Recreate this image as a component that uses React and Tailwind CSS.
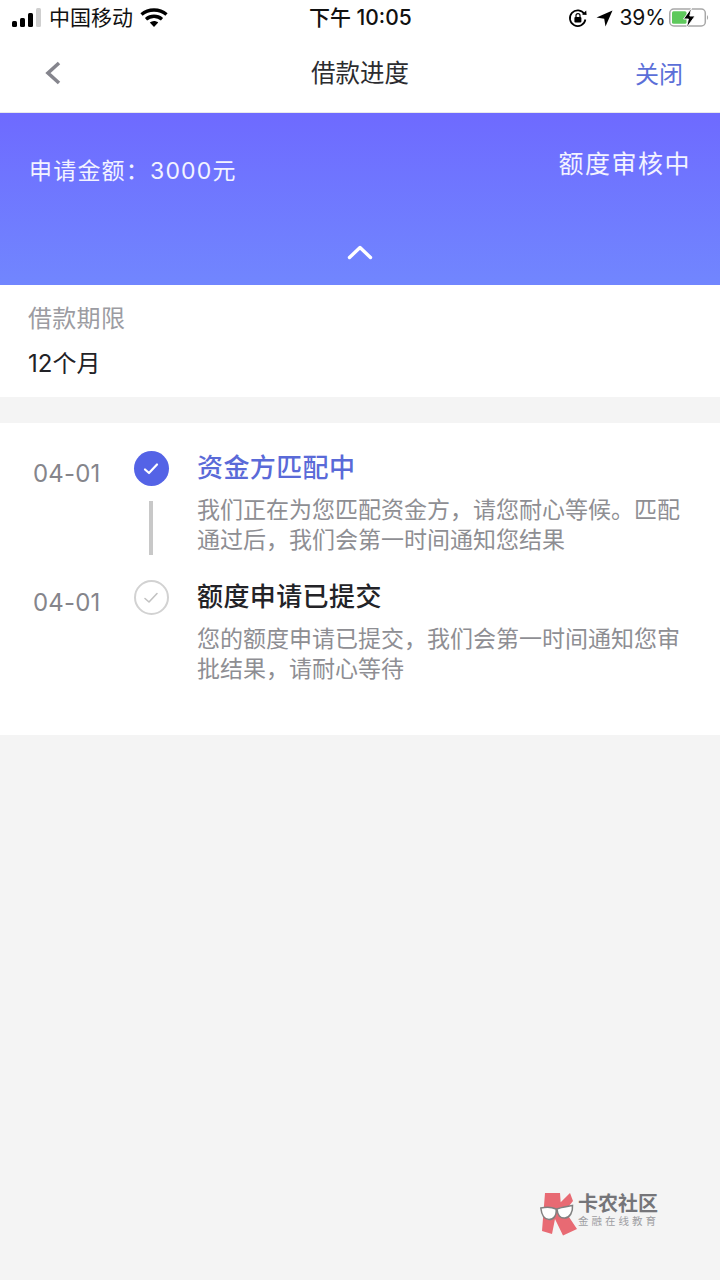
const font = { fontFamily: '"Inter","Noto Sans CJK SC",sans-serif' };

function Signal() {
  return (
    <svg width="30" height="20" viewBox="0 0 30 20" className="block">
      <rect x="0" y="13" width="5" height="6" rx="1.5" fill="#000" />
      <rect x="8" y="10" width="5" height="9" rx="1.5" fill="#000" />
      <rect x="16" y="5" width="5" height="14" rx="1.5" fill="#000" />
      <rect x="24" y="0" width="5" height="19" rx="1.5" fill="#cfcfcf" />
    </svg>
  );
}

function Wifi() {
  return (
    <svg width="28" height="20" viewBox="0 0 28 20" className="block">
      <path d="M1.5 6.5 C8.5 0.5 19.5 0.5 26.5 6.5" fill="none" stroke="#000" strokeWidth="3.4" />
      <path d="M6 11.2 C10.8 7.3 17.2 7.3 22 11.2" fill="none" stroke="#000" strokeWidth="3.4" />
      <path d="M9.8 14.4 C12.4 12.4 15.6 12.4 18.2 14.4 L14 19 Z" fill="#000" />
    </svg>
  );
}

function RotationLock() {
  return (
    <svg width="20" height="20" viewBox="0 0 20 20" className="block">
      <path d="M16.4 6.2 A7.8 7.8 0 1 0 17.4 11.5" fill="none" stroke="#000" strokeWidth="1.7" />
      <path d="M14 6.4 L18.6 7 L18.2 2.6 Z" fill="#000" />
      <rect x="6.4" y="9" width="7" height="5.4" rx="1" fill="#000" />
      <path d="M8 9 V7.6 A2 2 0 0 1 12 7.6 V9" fill="none" stroke="#000" strokeWidth="1.2" />
    </svg>
  );
}

function LocationArrow() {
  return (
    <svg width="17" height="17" viewBox="0 0 17 17" className="block">
      <path d="M16.5 0.5 L0.5 7.5 L8.2 8.8 L9.5 16.5 Z" fill="#000" />
    </svg>
  );
}

function Battery() {
  return (
    <svg width="42" height="22" viewBox="0 0 42 22" className="block">
      <rect x="0.8" y="2" width="35.5" height="17" rx="4" fill="none" stroke="#a8a8a8" strokeWidth="1.5" />
      <rect x="3" y="4.2" width="14.5" height="12.6" rx="1.5" fill="#5ec95c" />
      <path d="M38 8 Q40.3 10.5 38 13 Z" fill="#a8a8a8" />
      <path d="M22.5 1 L14.5 12 H19.4 L17.4 21 L26 9 H20.8 Z" fill="#000" stroke="#fff" strokeWidth="0.9" />
    </svg>
  );
}

function Check({ color, w = 2.2 }) {
  return (
    <svg width="16" height="14" viewBox="0 0 16 14" className="block">
      <path d="M2 7.5 L6 11 L14 2.5" fill="none" stroke={color} strokeWidth={w} strokeLinecap="round" strokeLinejoin="round" />
    </svg>
  );
}

function Logo() {
  return (
    <svg width="38" height="46" viewBox="0 0 38 46" className="block">
      <path d="M5 2 H20 L20.7 11.3 L30 2 L33 10 L25 20 L37 38 L23 44.5 L15 28 L12 43 L2 40 Z" fill="#e8636d" />
      <path d="M0.8 17 C5 16 12 16 16 18 C17 24 14 28.5 9 28.5 C4 28.5 1.5 23 0.8 17 Z" fill="#fff" stroke="#7a7a7a" strokeWidth="1.5" />
      <path d="M17 18 C21 16 27 15.5 32.5 14.5 C33 21 30 26.5 25 27 C20 27.5 17.5 24 17 18 Z" fill="#fff" stroke="#7a7a7a" strokeWidth="1.5" />
    </svg>
  );
}

function Step({ date, title, titleClass, desc, active, last }) {
  return (
    <div className="flex">
      <div className="w-[134px] shrink-0 pl-[33px] pt-[18px] text-[24px] leading-[32px] text-[#85858b] tracking-[0.2px]">{date}</div>
      <div className="w-[34px] shrink-0 flex flex-col items-center pt-[11px]">
        {active ? (
          <div className="w-[35px] h-[35px] rounded-full bg-[#5463e6] flex items-center justify-center">
            <Check color="#ffffff" />
          </div>
        ) : (
          <div className="w-[35px] h-[35px] rounded-full border-2 border-[#d2d2d2] flex items-center justify-center">
            <Check color="#c2c2c2" w={1.6} />
          </div>
        )}
        {!last && <div className="w-[4px] h-[54px] bg-[#c8c8c8] mt-[15px]" />}
      </div>
      <div className="flex-1 pl-[29px] pr-[36px]">
        <div className={`text-[26px] leading-[34px] pt-[11px] font-medium tracking-[0.4px] ${titleClass}`}>{title}</div>
        <div className="mt-[10px] text-[23px] leading-[30px] text-[#8e8e93]">{desc}</div>
      </div>
    </div>
  );
}

export default function App() {
  return (
    <div style={font} className="relative w-[720px] h-[1280px] bg-[#f4f4f4] overflow-hidden flex flex-col">
      <div className="h-[36px] bg-white flex items-center justify-between relative shrink-0">
        <div className="flex items-center pl-[12px]">
          <Signal />
          <span className="ml-[7px] text-[21px] leading-[36px] text-[#111]">中国移动</span>
          <span className="ml-[7px]"><Wifi /></span>
        </div>
        <div className="absolute left-[309px] top-0 text-[21px] leading-[36px] text-[#111] font-medium">下午 10:05</div>
        <div className="flex items-center pr-[9px]">
          <RotationLock />
          <span className="ml-[8px]"><LocationArrow /></span>
          <span className="ml-[6px] text-[21px] leading-[36px] text-[#111]">39%</span>
          <span className="ml-[3px]"><Battery /></span>
        </div>
      </div>

      <div className="h-[76px] bg-white flex items-center justify-between relative shrink-0 pl-[44px] pr-[37px]">
        <svg width="18" height="26" viewBox="0 0 18 26" className="block -mt-[2px]">
          <path d="M15 3 L4 13 L15 23" fill="none" stroke="#85858d" strokeWidth="3.6" />
        </svg>
        <div className="absolute left-0 right-0 top-[19px] text-center text-[24.5px] leading-[36px] text-[#2c2c30]">借款进度</div>
        <div className="text-[24px] leading-[36px] text-[#5b6fd8] mt-[1px]">关闭</div>
      </div>
      <div className="h-[1px] bg-[#e8e8ec] shrink-0" />

      <div className="h-[172px] shrink-0 bg-gradient-to-b from-[#6e6aff] to-[#7186fe] relative text-white">
        <div className="flex justify-between pl-[29px] pr-[29px]">
          <div className="text-[23px] leading-[32px] text-[#f3f3ff] mt-[42px] tracking-[1.2px]">申请金额：3000元</div>
          <div className="text-[25px] leading-[36px] text-[#f3f3ff] mt-[33px] tracking-[1.5px]">额度审核中</div>
        </div>
        <div className="flex justify-center mt-[57px]">
          <svg width="26" height="16" viewBox="0 0 26 16" className="block">
            <path d="M2.5 13.5 L13 3.5 L23.5 13.5" fill="none" stroke="#fff" strokeWidth="3.4" strokeLinecap="round" strokeLinejoin="round" />
          </svg>
        </div>
      </div>

      <div className="h-[112px] shrink-0 bg-white pl-[28px] pt-[17px]">
        <div className="text-[24px] leading-[34px] text-[#9c9ca2] tracking-[0.3px]">借款期限</div>
        <div className="text-[24px] leading-[34px] text-[#222226] mt-[11px]">12个月</div>
      </div>

      <div className="mt-[26px] h-[312px] shrink-0 bg-white pt-[17px]">
        <Step
          active
          date="04-01"
          title="资金方匹配中"
          titleClass="text-[#5a6ad8]"
          desc="我们正在为您匹配资金方，请您耐心等候。匹配通过后，我们会第一时间通知您结果"
        />
        <div className="mt-[14px]">
          <Step
            last
            date="04-01"
            title="额度申请已提交"
            titleClass="text-[#232327]"
            desc="您的额度申请已提交，我们会第一时间通知您审批结果，请耐心等待"
          />
        </div>
      </div>

      <div className="absolute left-[540px] top-[1192px] flex items-start opacity-95">
        <div className="-mt-[1px]"><Logo /></div>
        <div className="flex flex-col">
          <div className="text-[20px] leading-[24px] font-bold text-[#6f6f73] whitespace-nowrap">卡农社区</div>
          <div className="text-[10.5px] leading-[14px] -mt-[1px] text-[#9a9a9e] tracking-[3px] whitespace-nowrap">金融在线教育</div>
        </div>
      </div>
    </div>
  );
}
